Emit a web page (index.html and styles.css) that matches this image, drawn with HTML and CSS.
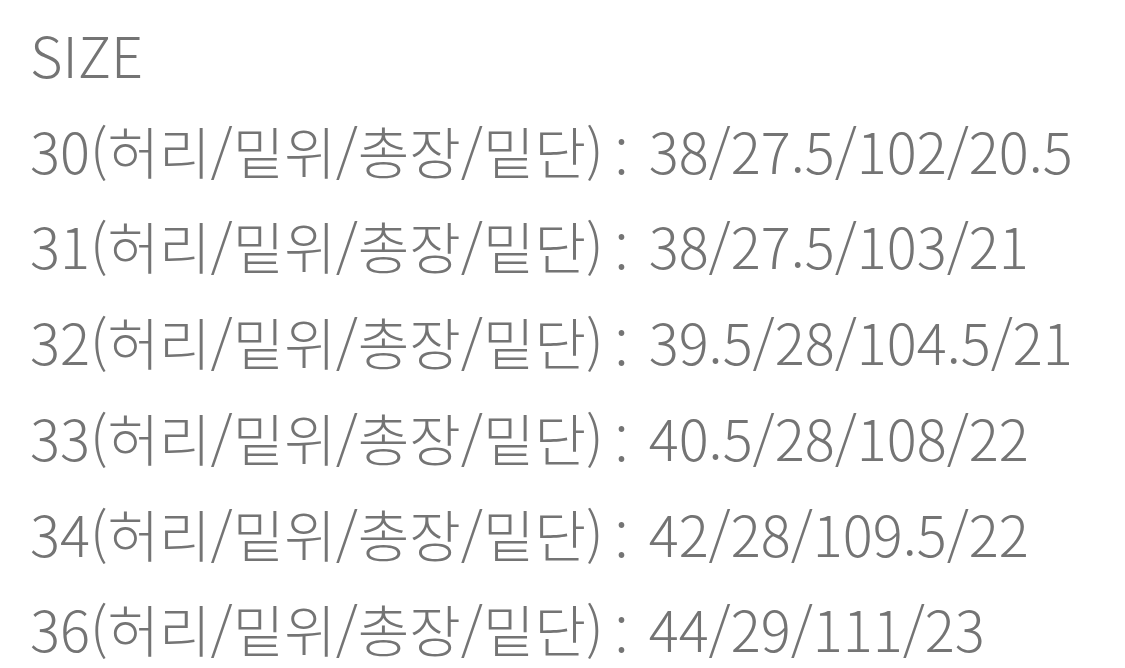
FILE: index.html
```html
<!DOCTYPE html>
<html lang="ko">
<head>
<meta charset="utf-8">
<link rel="stylesheet" href="styles.css">
</head>
<body>
<div class="sizes">
  <p class="line">SIZE</p>
  <p class="line"><span class="label">30(허리/밑위/총장/밑단)</span><span class="sep">:</span><span class="val">38/27.5/102/20.5</span></p>
  <p class="line"><span class="label">31(허리/밑위/총장/밑단)</span><span class="sep">:</span><span class="val">38/27.5/103/21</span></p>
  <p class="line"><span class="label">32(허리/밑위/총장/밑단)</span><span class="sep">:</span><span class="val">39.5/28/104.5/21</span></p>
  <p class="line"><span class="label">33(허리/밑위/총장/밑단)</span><span class="sep">:</span><span class="val">40.5/28/108/22</span></p>
  <p class="line"><span class="label">34(허리/밑위/총장/밑단)</span><span class="sep">:</span><span class="val">42/28/109.5/22</span></p>
  <p class="line"><span class="label">36(허리/밑위/총장/밑단)</span><span class="sep">:</span><span class="val">44/29/111/23</span></p>
</div>
</body>
</html>
```
FILE: styles.css
```css
html, body {
  margin: 0;
  padding: 0;
  background: #ffffff;
}
.sizes {
  padding: 6px 0 0 30px;
  font-family: "Noto Sans CJK KR", "Noto Sans", sans-serif;
  font-weight: 300;
  font-size: 56px;
  color: #747474;
}
.line {
  margin: 0;
  line-height: 95.7px;
  white-space: nowrap;
}
.sep {
  margin: 0 20px 0 11px;
  line-height: 1;
  vertical-align: -6px;
}
```
